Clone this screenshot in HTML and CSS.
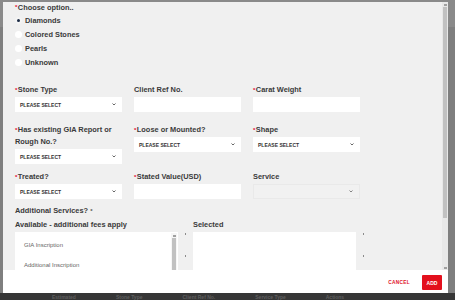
FILE: index.html
```html
<!DOCTYPE html>
<html lang="en">
<head>
  <meta charset="UTF-8">
  <title>Add Stone</title>
  <link rel="stylesheet" href="styles.css">
</head>
<body>
  <div class="overlay">
    <div class="modal">
      <div class="modal-main">
        <div class="modal-body">
          <div class="choose-title"><span class="req">*</span>Choose option..</div>
          <div class="radio-list">
            <div class="radio-item"><span class="radio checked"></span>Diamonds</div>
            <div class="radio-item"><span class="radio"></span>Colored Stones</div>
            <div class="radio-item"><span class="radio"></span>Pearls</div>
            <div class="radio-item"><span class="radio"></span>Unknown</div>
          </div>

          <div class="row">
            <div class="field">
              <label><span class="req">*</span>Stone Type</label>
              <div class="select">PLEASE SELECT<svg class="chev" width="4" height="3" viewBox="0 0 4 3"><path d="M0.5 0.5 L2 2 L3.5 0.5" fill="none" stroke="#555" stroke-width="0.9"/></svg></div>
            </div>
            <div class="field">
              <label>Client Ref No.</label>
              <div class="input"></div>
            </div>
            <div class="field">
              <label><span class="req">*</span>Carat Weight</label>
              <div class="input"></div>
            </div>
          </div>

          <div class="row row-second">
            <div class="field">
              <label><span class="req">*</span>Has existing GIA Report or Rough No.?</label>
              <div class="select">PLEASE SELECT<svg class="chev" width="4" height="3" viewBox="0 0 4 3"><path d="M0.5 0.5 L2 2 L3.5 0.5" fill="none" stroke="#555" stroke-width="0.9"/></svg></div>
            </div>
            <div class="field">
              <label><span class="req">*</span>Loose or Mounted?</label>
              <div class="select">PLEASE SELECT<svg class="chev" width="4" height="3" viewBox="0 0 4 3"><path d="M0.5 0.5 L2 2 L3.5 0.5" fill="none" stroke="#555" stroke-width="0.9"/></svg></div>
            </div>
            <div class="field">
              <label><span class="req">*</span>Shape</label>
              <div class="select">PLEASE SELECT<svg class="chev" width="4" height="3" viewBox="0 0 4 3"><path d="M0.5 0.5 L2 2 L3.5 0.5" fill="none" stroke="#555" stroke-width="0.9"/></svg></div>
            </div>
          </div>

          <div class="row row-third">
            <div class="field">
              <label><span class="req">*</span>Treated?</label>
              <div class="select">PLEASE SELECT<svg class="chev" width="4" height="3" viewBox="0 0 4 3"><path d="M0.5 0.5 L2 2 L3.5 0.5" fill="none" stroke="#555" stroke-width="0.9"/></svg></div>
            </div>
            <div class="field">
              <label><span class="req">*</span>Stated Value(USD)</label>
              <div class="input"></div>
            </div>
            <div class="field">
              <label>Service</label>
              <div class="select disabled"><svg class="chev" width="4" height="3" viewBox="0 0 4 3"><path d="M0.5 0.5 L2 2 L3.5 0.5" fill="none" stroke="#777" stroke-width="0.9"/></svg></div>
            </div>
          </div>

          <div class="extra-title">Additional Services? <span class="star">*</span></div>
          <div class="lists">
            <div class="list-col">
              <div class="list-label">Available - additional fees apply</div>
              <div class="list-box scroll">
                <div class="list-items">
                  <div class="list-item">GIA Inscription</div>
                  <div class="list-item">Additional Inscription</div>
                  <div class="list-item">Laser Inscription Removal</div>
                </div>
                <div class="vscroll small">
                  <span class="sb-btn"></span>
                  <div class="sb-track"><span class="sb-thumb"></span></div>
                  <span class="sb-btn"></span>
                </div>
              </div>
            </div>
            <div class="move-col">
              <span class="dot"></span>
              <span class="dot"></span>
            </div>
            <div class="list-col">
              <div class="list-label">Selected</div>
              <div class="list-box"></div>
            </div>
            <div class="move-col">
              <span class="dot"></span>
              <span class="dot"></span>
            </div>
          </div>
        </div>
        <div class="vscroll">
          <span class="sb-btn"></span>
          <div class="sb-track"><span class="sb-thumb"></span></div>
          <span class="sb-btn"></span>
        </div>
      </div>
      <div class="modal-footer">
        <button class="btn-cancel">CANCEL</button>
        <button class="btn-add">ADD</button>
      </div>
    </div>
  </div>
  <div class="page-strip">
    <span>Estimated</span>
    <span>Stone Type</span>
    <span>Client Ref No.</span>
    <span>Service Type</span>
    <span>Actions</span>
  </div>
</body>
</html>
```

FILE: styles.css
```css
* {
  box-sizing: border-box;
}
html, body {
  margin: 0;
  height: 300px;
  overflow: hidden;
}
body {
  font-family: "Liberation Sans", Arial, sans-serif;
  background: linear-gradient(#8a8a8a 27px, #7f7f7f 27px);
  color: #3a3a3a;
}
.overlay {
  padding: 2px 7px 0 3px;
}
.modal {
  width: 445px;
  height: 291px;
  display: flex;
  flex-direction: column;
}
.modal-main {
  height: 268px;
  display: flex;
  background: #f0f0f0;
}
.modal-body {
  flex: 1;
  overflow: hidden;
  padding-left: 12px;
}

/* scrollbars (drawn, the browser hides its own) */
.vscroll {
  width: 6px;
  display: flex;
  flex-direction: column;
  background: #e8e8e8;
}
.sb-btn {
  height: 5px;
  background: linear-gradient(#a0a0a0, #a0a0a0) center / 3px 2px no-repeat;
}
.sb-track {
  flex: 1;
  padding: 0 1px;
}
.sb-thumb {
  display: block;
  height: 211px;
  background: #c1c1c1;
}
.vscroll.small {
  background: #f6f6f6;
  margin: 1px 1px 0 0;
}
.vscroll.small .sb-thumb {
  height: 60px;
}

/* Choose option */
.choose-title {
  font-size: 7.4px;
  font-weight: bold;
  line-height: 11px;
  height: 11px;
}
.req {
  color: #e4002b;
  font-size: 6px;
  vertical-align: top;
  margin-right: 0.5px;
}
.radio-list {
  margin-bottom: 15px;
}
.radio-item {
  display: flex;
  align-items: center;
  height: 14px;
  font-size: 7.4px;
  font-weight: bold;
}
.radio {
  width: 7px;
  height: 7px;
  border-radius: 50%;
  background: #fff;
  margin: 0 3px 0 0;
  display: flex;
  align-items: center;
  justify-content: center;
}
.radio.checked {
  background: #f4f4f4;
}
.radio.checked::after {
  content: "";
  width: 3px;
  height: 3px;
  border-radius: 50%;
  background: #1b2b45;
}

/* Fields */
.row {
  display: grid;
  grid-template-columns: 107px 107px 107px;
  column-gap: 12px;
  align-items: start;
}
.row-second {
  margin-top: 12px;
}
.row-third {
  margin-top: 7px;
}
.field label {
  display: block;
  font-size: 7.4px;
  font-weight: bold;
  line-height: 12px;
  margin-bottom: 1px;
}
.input {
  height: 15px;
  background: #fff;
}
.select {
  height: 15px;
  background: #fff;
  display: flex;
  align-items: center;
  justify-content: space-between;
  padding: 0 6px 0 5px;
  font-size: 5px;
  font-weight: bold;
  color: #333;
}
.select.disabled {
  background: #f1f1f1;
  border: 1px solid #e9e9e9;
  justify-content: flex-end;
}
.chev {
  display: block;
}

/* Additional services */
.extra-title {
  margin-top: 6px;
  font-size: 7.4px;
  font-weight: bold;
  line-height: 12px;
}
.star {
  font-size: 6px;
  vertical-align: top;
  color: #555;
}
.lists {
  display: flex;
  margin-top: 2px;
}
.list-col {
  width: 163px;
}
.list-label {
  font-size: 7.4px;
  font-weight: bold;
  line-height: 12px;
  margin-bottom: 1px;
}
.list-box {
  height: 80px;
  background: #fff;
}
.list-box.scroll {
  display: flex;
}
.list-items {
  flex: 1;
  padding-top: 3px;
}
.list-item {
  font-size: 6px;
  line-height: 20px;
  padding-left: 9px;
  color: #666;
}
.move-col {
  width: 15px;
  padding-top: 14px;
  display: flex;
  flex-direction: column;
  align-items: center;
  gap: 20px;
}
.dot {
  width: 1.5px;
  height: 2px;
  background: #8a8a8a;
}

/* Footer */
.modal-footer {
  height: 23px;
  background: #fff;
  display: flex;
  align-items: center;
  justify-content: flex-end;
  padding: 2px 6px 0 0;
  gap: 12px;
}
.btn-cancel {
  background: none;
  border: none;
  padding: 0;
  font-family: "Liberation Sans", Arial, sans-serif;
  font-size: 4.8px;
  font-weight: bold;
  letter-spacing: 0.3px;
  color: #e0101f;
}
.btn-add {
  width: 20px;
  height: 15px;
  border: none;
  border-radius: 1px;
  padding: 0;
  background: #e3101d;
  color: #fff;
  font-family: "Liberation Sans", Arial, sans-serif;
  font-size: 5px;
  font-weight: bold;
}

/* Page under the overlay */
.page-strip {
  height: 7px;
  background: #363636;
  display: flex;
  gap: 40px;
  padding-left: 52px;
  font-size: 5px;
  line-height: 8px;
  font-weight: bold;
  color: #5e5e5e;
  white-space: nowrap;
}
```
